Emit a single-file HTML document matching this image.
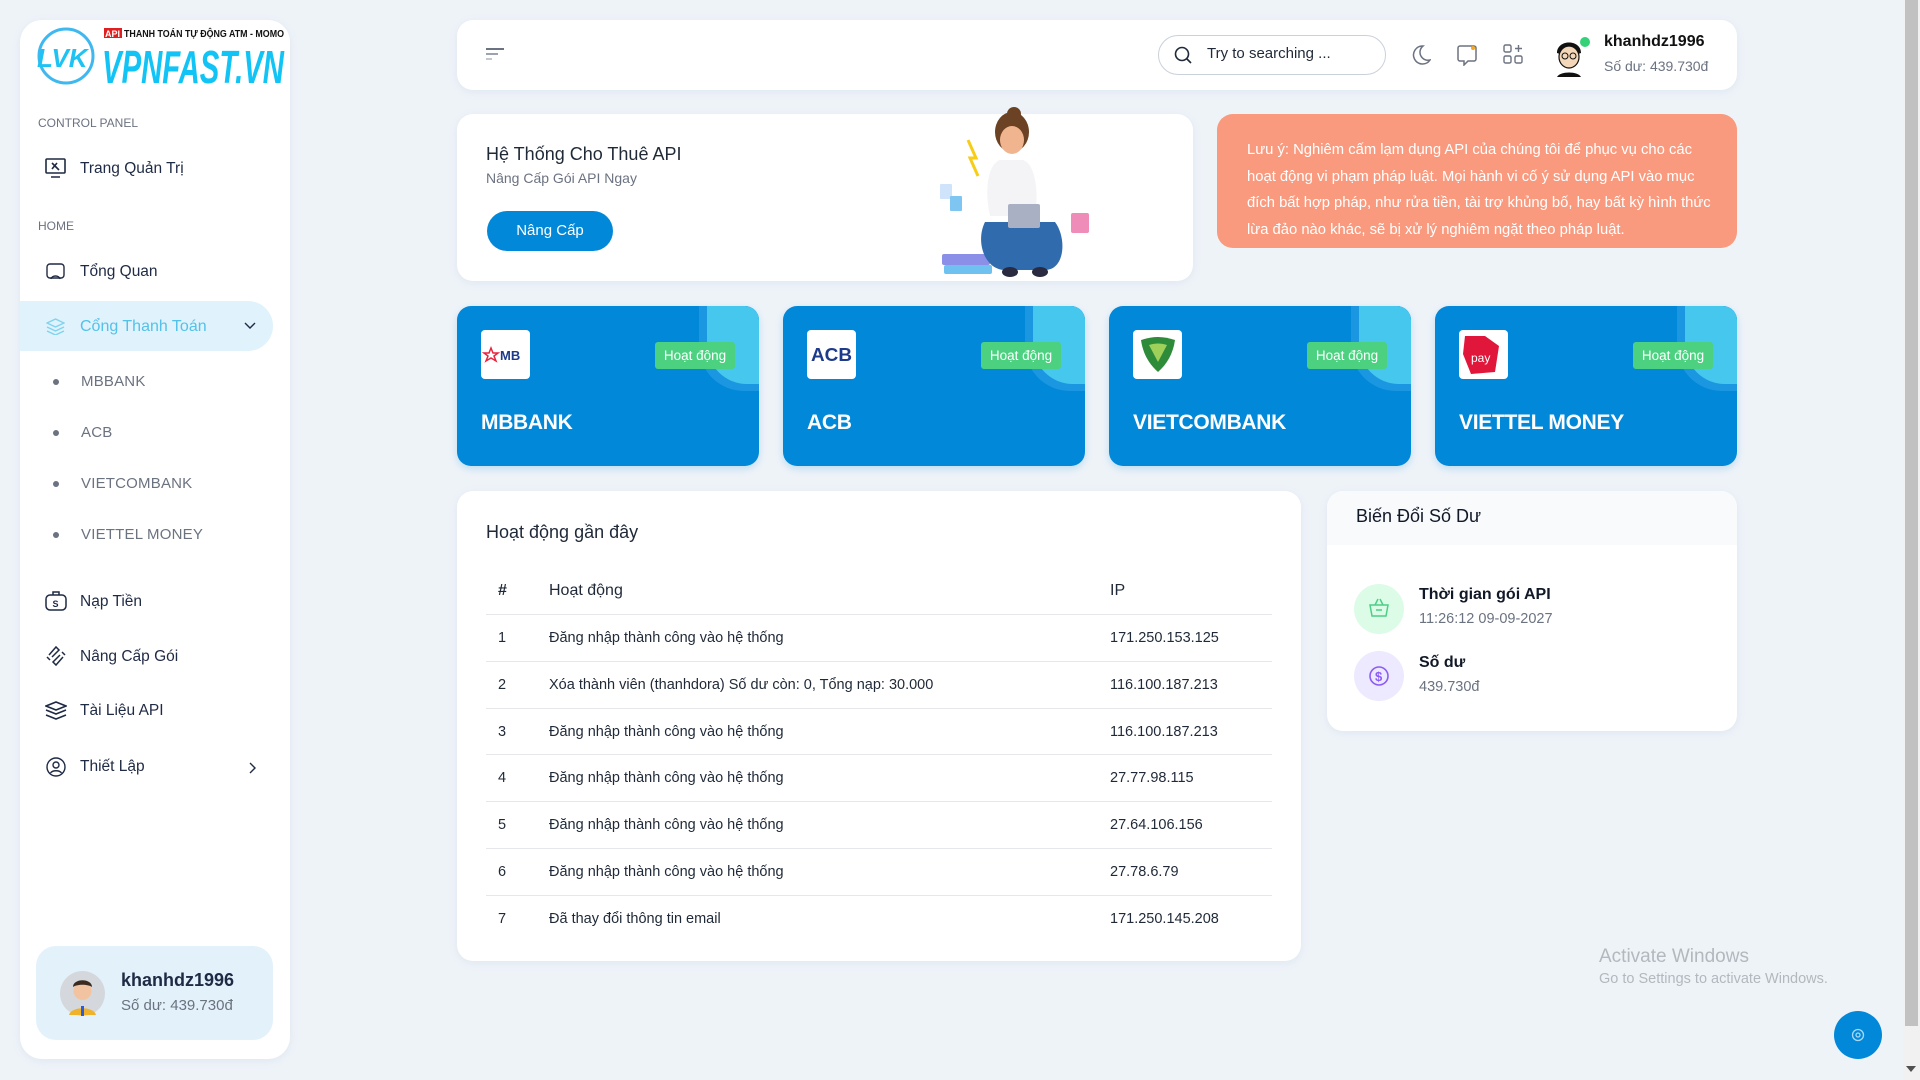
<!DOCTYPE html>
<html><head><meta charset="utf-8"><style>
*{box-sizing:border-box;margin:0;padding:0}
body{width:1920px;height:1080px;background:#eef3f8;font-family:"Liberation Sans","Noto Sans CJK SC",sans-serif;color:#1f2937;position:relative;overflow:hidden}
.abs{position:absolute}
.card{position:absolute;background:#fff;border-radius:18px;box-shadow:0 2px 8px rgba(150,170,200,.15)}
.t{position:absolute;white-space:nowrap}
.sb-l{font-size:12px;color:#6b7280;left:38px}
.nav{font-size:15.5px;color:#1f2a44;left:80px}
.sub{font-size:15px;color:#6b7280;left:81px;letter-spacing:.2px}
.dot{position:absolute;left:53px;width:6px;height:6px;border-radius:50%;background:#6b7280}
.bank{position:absolute;top:306px;width:302px;height:160px;background:#0288d9;border-radius:14px;overflow:hidden;box-shadow:0 3px 8px rgba(2,136,217,.2)}
.bank .blob{position:absolute;right:0;top:0;width:52px;height:78px;background:#46c7ee;border-radius:0 14px 0 40px}
.bank .blob2{position:absolute;right:0;top:0;width:60px;height:85px;background:#1a97e0;border-radius:0 14px 0 45px}
.bank .logo{position:absolute;left:24px;top:24px;width:49px;height:49px;background:#fff;border-radius:4px;overflow:hidden}
.bank .badge{position:absolute;left:198px;top:36px;width:80px;height:27px;background:#4cd180;border-radius:3px;color:#fff;font-size:13.5px;line-height:27px;text-align:center}
.bank .name{position:absolute;left:24px;top:105px;font-size:21px;font-weight:bold;color:#fff;letter-spacing:-.3px}
.row{position:absolute;left:486px;width:786px;height:47px;border-top:1px solid #e5e7eb;font-size:14.5px;color:#1f2937}
.row span{position:absolute;top:15px}
</style></head><body>

<!-- Sidebar -->
<div class="card" style="left:20px;top:20px;width:270px;height:1039px;border-radius:22px"></div>
<svg class="abs" style="left:34px;top:26px" width="252" height="62">
<circle cx="32" cy="30" r="27" fill="none" stroke="#3fb8f0" stroke-width="3"/>
<text x="3" y="41" font-family="Liberation Sans" font-style="italic" font-weight="bold" font-size="26" fill="#1ec3f3">LVK</text>
<rect x="70" y="2" width="18" height="10" fill="#e02020"/>
<text x="71" y="11" font-family="Liberation Sans" font-weight="bold" font-size="9" fill="#fff">API</text>
<text x="90" y="11" font-family="Liberation Sans" font-weight="bold" font-size="10" fill="#111" textLength="160" lengthAdjust="spacingAndGlyphs">THANH TOÁN TỰ ĐỘNG ATM - MOMO</text>
<text x="68" y="57" font-family="Liberation Sans" font-style="italic" font-weight="bold" font-size="46" fill="#11c4f5" textLength="182" lengthAdjust="spacingAndGlyphs">VPNFAST.VN</text>
</svg>
<div class="t sb-l" style="top:116px">CONTROL PANEL</div>
<svg class="abs" style="left:45px;top:158px" width="21" height="21" fill="none" stroke="#1f2a44" stroke-width="1.6"><rect x="1" y="1" width="19" height="14" rx="1"/><path d="M6 19h9M7 5l7 7M12 5l-5 6"/></svg>
<div class="t nav" style="top:160px">Trang Quản Trị</div>
<div class="t sb-l" style="top:219px">HOME</div>
<svg class="abs" style="left:46px;top:263px" width="19" height="19" fill="none" stroke="#1f2a44" stroke-width="1.4"><rect x="1" y="1" width="17" height="14" rx="3"/><path d="M5 16c1-4 8-4 9 0"/></svg>
<div class="t nav" style="top:263px">Tổng Quan</div>
<div class="abs" style="left:20px;top:301px;width:253px;height:50px;background:#e0f2fb;border-radius:0 25px 25px 0"></div>
<svg class="abs" style="left:46px;top:318px" width="19" height="17" fill="none" stroke="#7fd3ef" stroke-width="1.4"><path d="M9.5 1L18 5l-8.5 4L1 5z M1 9l8.5 4L18 9 M1 13l8.5 4 8.5-4"/></svg>
<div class="t nav" style="top:318px;color:#52c2ea;font-size:16px">Cổng Thanh Toán</div>
<svg class="abs" style="left:244px;top:322px" width="12" height="8" fill="none" stroke="#1f2a44" stroke-width="1.4"><path d="M1 1l5 5 5-5"/></svg>
<div class="dot" style="top:379px"></div><div class="t sub" style="top:373px">MBBANK</div>
<div class="dot" style="top:430px"></div><div class="t sub" style="top:424px">ACB</div>
<div class="dot" style="top:481px"></div><div class="t sub" style="top:475px">VIETCOMBANK</div>
<div class="dot" style="top:532px"></div><div class="t sub" style="top:526px">VIETTEL MONEY</div>
<svg class="abs" style="left:45px;top:591px" width="22" height="20" fill="none" stroke="#1f2a44" stroke-width="1.5"><rect x="1" y="4" width="20" height="15" rx="4"/><path d="M8 4V1h6v3"/><text x="7.5" y="16" font-size="9" font-family="Liberation Sans" fill="#1f2a44" stroke="none" font-weight="bold">S</text></svg>
<div class="t nav" style="top:593px">Nạp Tiền</div>
<svg class="abs" style="left:45px;top:645px" width="22" height="22" fill="none" stroke="#1f2a44" stroke-width="1.5"><path d="M4 10l7-8 3 3-7 7M18 12l-7 8-3-3 7-7M2 12l3 3M20 10l-3-3"/></svg>
<div class="t nav" style="top:648px">Nâng Cấp Gói</div>
<svg class="abs" style="left:45px;top:701px" width="22" height="20" fill="none" stroke="#1f2a44" stroke-width="1.6"><path d="M11 1l10 4-10 4L1 5z M1 9l10 4 10-4 M1 14l10 4 10-4"/></svg>
<div class="t nav" style="top:702px">Tài Liệu API</div>
<svg class="abs" style="left:46px;top:757px" width="20" height="20" fill="none" stroke="#1f2a44" stroke-width="1.4"><circle cx="10" cy="10" r="9"/><circle cx="10" cy="8" r="3"/><path d="M4.5 16c2-3 9-3 11 0"/></svg>
<div class="t nav" style="top:758px">Thiết Lập</div>
<svg class="abs" style="left:249px;top:762px" width="8" height="12" fill="none" stroke="#1f2a44" stroke-width="1.4"><path d="M1 1l5 5-5 5"/></svg>
<div class="abs" style="left:36px;top:946px;width:237px;height:94px;background:#e3f1fb;border-radius:20px"></div>
<svg class="abs" style="left:60px;top:971px" width="45" height="45"><circle cx="22.5" cy="22.5" r="22.5" fill="#d4d8dc"/><circle cx="22.5" cy="20" r="9" fill="#f2c3a0"/><path d="M13 16c0-9 19-9 19 0c-4-3-15-3-19 0z" fill="#3a2a20"/><path d="M9 44c2-9 25-9 27 0z" fill="#f0b22a"/><rect x="21" y="35" width="3" height="10" fill="#2a5bd8"/></svg>
<div class="t" style="left:121px;top:970px;font-size:18px;font-weight:bold;color:#1f2a44">khanhdz1996</div>
<div class="t" style="left:121px;top:997px;font-size:15px;color:#6b7280">Số dư: 439.730đ</div>

<!-- Header -->
<div class="card" style="left:457px;top:20px;width:1280px;height:70px;border-radius:16px"></div>
<svg class="abs" style="left:486px;top:48px" width="18" height="14"><rect x="0" y="0" width="18" height="2" fill="#6b7280"/><rect x="0" y="5" width="12" height="2" fill="#9ca3af"/><rect x="0" y="10" width="6" height="2" fill="#c4c9d0"/></svg>
<div class="abs" style="left:1158px;top:35px;width:228px;height:40px;border:1px solid #c9d1da;border-radius:20px"></div>
<svg class="abs" style="left:1174px;top:46px" width="18" height="18" fill="none" stroke="#1f2937" stroke-width="1.6"><circle cx="8" cy="8" r="6.5"/><path d="M13 13l4 4"/></svg>
<div class="t" style="left:1207px;top:45px;font-size:15px;color:#1f2937">Try to searching ...</div>
<svg class="abs" style="left:1411px;top:44px" width="20" height="22" fill="none" stroke="#6b7280" stroke-width="1.5"><path d="M12 2a9 9 0 1 0 7 14A8 8 0 0 1 12 2z"/></svg>
<svg class="abs" style="left:1456px;top:44px" width="22" height="22" fill="none" stroke="#6b7280" stroke-width="1.5"><path d="M4 2h14a2 2 0 0 1 2 2v11a2 2 0 0 1-2 2h-6l-4 4v-4H4a2 2 0 0 1-2-2V4a2 2 0 0 1 2-2z"/><circle cx="17" cy="4" r="2" fill="#f5a623" stroke="none"/></svg>
<svg class="abs" style="left:1503px;top:44px" width="20" height="22" fill="none" stroke="#6b7280" stroke-width="1.4"><rect x="1" y="1" width="7" height="7" rx="1.5"/><rect x="1" y="12" width="7" height="7" rx="1.5"/><rect x="12" y="12" width="7" height="7" rx="1.5"/><path d="M15.5 1v7M12 4.5h7"/></svg>
<svg class="abs" style="left:1549px;top:33px" width="42" height="44"><circle cx="20" cy="22" r="20" fill="#fff"/><path d="M8 20c0-14 24-14 24 0l-3 1c-3-4-15-4-18 0z" fill="#111"/><ellipse cx="20" cy="24" rx="10" ry="11" fill="#f4d7b8" stroke="#111" stroke-width="1.2"/><circle cx="16" cy="23" r="3" fill="none" stroke="#111"/><circle cx="24" cy="23" r="3" fill="none" stroke="#111"/><path d="M8 44c3-6 21-6 24 0z" fill="#111"/><circle cx="36" cy="9" r="5" fill="#34d178"/></svg>
<div class="t" style="left:1604px;top:33px;font-size:16px;font-weight:bold;color:#111">khanhdz1996</div>
<div class="t" style="left:1604px;top:58px;font-size:14px;color:#6b7280">Số dư: 439.730đ</div>

<!-- Banner -->
<div class="card" style="left:457px;top:114px;width:736px;height:167px;border-radius:16px"></div>
<div class="t" style="left:486px;top:144px;font-size:18px;color:#1f2937">Hệ Thống Cho Thuê API</div>
<div class="t" style="left:486px;top:170px;font-size:14px;color:#6b7280">Nâng Cấp Gói API Ngay</div>
<div class="abs" style="left:487px;top:211px;width:126px;height:40px;background:#0288d9;border-radius:20px;color:#fff;font-size:15px;line-height:40px;text-align:center">Nâng Cấp</div>
<svg class="abs" style="left:890px;top:104px" width="210" height="180">
<path d="M78 36l8 18-6 0 8 18" fill="none" stroke="#f7cd18" stroke-width="3"/>
<rect x="52" y="150" width="48" height="11" rx="2" fill="#8b8fe8"/><rect x="54" y="161" width="48" height="9" rx="2" fill="#6fc2ef"/>
<rect x="50" y="80" width="12" height="15" rx="1" fill="#cfe3fb"/><rect x="60" y="92" width="12" height="15" rx="1" fill="#7ec5f2"/>
<rect x="181" y="109" width="18" height="20" rx="2" fill="#f08cb8"/>
<ellipse cx="122" cy="28" rx="17" ry="20" fill="#6b4324"/><circle cx="124" cy="10" r="7" fill="#6b4324"/>
<ellipse cx="122" cy="36" rx="12" ry="14" fill="#f0b58e"/>
<path d="M110 56c-12 4-16 30-10 56h45c4-26 0-52-12-56z" fill="#f4f4f6"/>
<path d="M95 118c-10 20 0 48 20 48h40c20 0 22-32 10-48z" fill="#2f6bad"/>
<rect x="118" y="100" width="32" height="24" rx="2" fill="#a9b0c4"/>
<ellipse cx="120" cy="168" rx="8" ry="5" fill="#2a2a40"/><ellipse cx="150" cy="168" rx="8" ry="5" fill="#2a2a40"/>
</svg>

<!-- Alert -->
<div class="abs" style="left:1217px;top:114px;width:520px;height:134px;background:#f99a7e;border-radius:16px"></div>
<div class="abs" style="left:1247px;top:137px;white-space:nowrap;font-size:14.8px;line-height:26.5px;color:#fff;letter-spacing:0">Lưu ý: Nghiêm cấm lạm dụng API của chúng tôi để phục vụ cho các<br>hoạt động vi phạm pháp luật. Mọi hành vi cố ý sử dụng API vào mục<br>đích bất hợp pháp, như rửa tiền, tài trợ khủng bố, hay bất kỳ hình thức<br>lừa đảo nào khác, sẽ bị xử lý nghiêm ngặt theo pháp luật.</div>

<!-- Banks -->
<div class="bank" style="left:457px"><div class="blob2"></div><div class="blob"></div>
<div class="logo"><svg width="49" height="49"><path d="M10 18l2 5h5l-4 3 2 5-5-3-5 3 2-5-4-3h5z" fill="none" stroke="#e8243d" stroke-width="1.5"/><text x="19" y="30" font-family="Liberation Sans" font-weight="bold" font-size="13" fill="#1e3a8a">MB</text></svg></div>
<div class="badge">Hoạt động</div><div class="name">MBBANK</div></div>
<div class="bank" style="left:783px"><div class="blob2"></div><div class="blob"></div>
<div class="logo"><svg width="49" height="49"><text x="4" y="31" font-family="Liberation Sans" font-weight="bold" font-size="18" fill="#1e3a8a" textLength="41" lengthAdjust="spacingAndGlyphs">ACB</text></svg></div>
<div class="badge">Hoạt động</div><div class="name">ACB</div></div>
<div class="bank" style="left:1109px"><div class="blob2"></div><div class="blob"></div>
<div class="logo"><svg width="49" height="49"><path d="M8 10c12-4 22-4 34 0c-2 14-8 24-17 32C16 34 10 24 8 10z" fill="#2e8b3a"/><path d="M16 15c6-2 12-2 18 0l-9 17z" fill="#9fd05a"/></svg></div>
<div class="badge">Hoạt động</div><div class="name">VIETCOMBANK</div></div>
<div class="bank" style="left:1435px"><div class="blob2"></div><div class="blob"></div>
<div class="logo"><svg width="49" height="49"><path d="M6 6h20l14 10-4 26-24 2-8-20z" fill="#e0173a"/><text x="12" y="32" font-family="Liberation Sans" font-size="12" fill="#fff">pay</text></svg></div>
<div class="badge">Hoạt động</div><div class="name">VIETTEL MONEY</div></div>

<!-- Activity -->
<div class="card" style="left:457px;top:491px;width:844px;height:470px;border-radius:16px"></div>
<div class="t" style="left:486px;top:522px;font-size:18px;color:#1f2937">Hoạt động gần đây</div>
<div class="t" style="left:498px;top:582px;font-size:16px;font-weight:bold">#</div>
<div class="t" style="left:549px;top:582px;font-size:16px">Hoạt động</div>
<div class="t" style="left:1110px;top:582px;font-size:16px">IP</div>
<div class="row" style="top:614px"><span style="left:12px">1</span><span style="left:63px">Đăng nhập thành công vào hệ thống</span><span style="left:624px">171.250.153.125</span></div>
<div class="row" style="top:661px"><span style="left:12px">2</span><span style="left:63px">Xóa thành viên (thanhdora) Số dư còn: 0, Tổng nạp: 30.000</span><span style="left:624px">116.100.187.213</span></div>
<div class="row" style="top:708px"><span style="left:12px">3</span><span style="left:63px">Đăng nhập thành công vào hệ thống</span><span style="left:624px">116.100.187.213</span></div>
<div class="row" style="top:754px"><span style="left:12px">4</span><span style="left:63px">Đăng nhập thành công vào hệ thống</span><span style="left:624px">27.77.98.115</span></div>
<div class="row" style="top:801px"><span style="left:12px">5</span><span style="left:63px">Đăng nhập thành công vào hệ thống</span><span style="left:624px">27.64.106.156</span></div>
<div class="row" style="top:848px"><span style="left:12px">6</span><span style="left:63px">Đăng nhập thành công vào hệ thống</span><span style="left:624px">27.78.6.79</span></div>
<div class="row" style="top:895px"><span style="left:12px">7</span><span style="left:63px">Đã thay đổi thông tin email</span><span style="left:624px">171.250.145.208</span></div>

<!-- Balance -->
<div class="card" style="left:1327px;top:491px;width:410px;height:240px;border-radius:16px;overflow:hidden"><div style="height:54px;background:#f9fafb"></div></div>
<div class="t" style="left:1356px;top:506px;font-size:18px;color:#111827">Biến Đổi Số Dư</div>
<div class="abs" style="left:1354px;top:584px;width:50px;height:50px;border-radius:50%;background:#dcfce7"></div>
<svg class="abs" style="left:1368px;top:597px" width="22" height="22" fill="none" stroke="#4ccf86" stroke-width="1.5"><path d="M2 8h18l-2 11H4z M7 8l3-6M15 8l-3-6 M8 13h6"/></svg>
<div class="t" style="left:1419px;top:586px;font-size:16px;font-weight:bold;color:#111827">Thời gian gói API</div>
<div class="t" style="left:1419px;top:611px;font-size:14.5px;color:#6b7280">11:26:12 09-09-2027</div>
<div class="abs" style="left:1354px;top:651px;width:50px;height:50px;border-radius:50%;background:#ede9fe"></div>
<svg class="abs" style="left:1368px;top:665px" width="22" height="22" fill="none" stroke="#8b5cf6" stroke-width="1.6"><circle cx="11" cy="11" r="9"/><text x="7" y="16" font-size="13" font-family="Liberation Sans" font-weight="bold" fill="#8b5cf6" stroke="none">$</text></svg>
<div class="t" style="left:1419px;top:654px;font-size:16px;font-weight:bold;color:#111827">Số dư</div>
<div class="t" style="left:1419px;top:679px;font-size:14.5px;color:#6b7280">439.730đ</div>

<!-- Windows watermark -->
<div class="t" style="left:1599px;top:946px;font-size:19px;color:#b3b8be">Activate Windows</div>
<div class="t" style="left:1599px;top:971px;font-size:14.5px;color:#b3b8be">Go to Settings to activate Windows.</div>
<div class="abs" style="left:1834px;top:1011px;width:48px;height:48px;border-radius:50%;background:#0288d9"></div>
<svg class="abs" style="left:1851px;top:1028px" width="14" height="14" fill="none" stroke="#a8d8f5" stroke-width="1.3"><circle cx="7" cy="7" r="2"/><circle cx="7" cy="7" r="5.5"/></svg>

<!-- Scrollbar -->
<div class="abs" style="left:1903px;top:0;width:17px;height:1080px;background:#f1f1f1"></div>
<div class="abs" style="left:1905px;top:0;width:13px;height:1026px;background:#c1c1c1"></div>
<svg class="abs" style="left:1906px;top:1066px" width="10" height="6"><path d="M0 0h10L5 6z" fill="#505050"/></svg>
</body></html>
